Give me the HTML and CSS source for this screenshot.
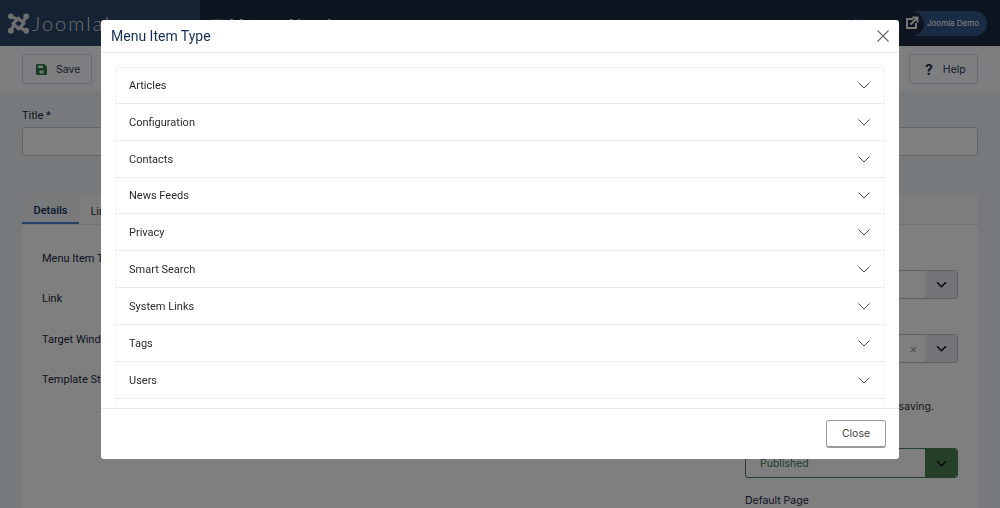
FILE: index.html
```html
<!DOCTYPE html>
<html lang="en">
<head>
  <meta charset="UTF-8">
  <title>Menus: New Item</title>
  <link rel="stylesheet" href="styles.css">
</head>
<body>
  <header class="topbar">
    <div class="brand">
      <svg class="brand-icon" viewBox="0 0 24 24" width="23" height="23" aria-hidden="true">
        <path class="brand-ring" d="M12 6.500 17.500 12 12 17.500 6.500 12z"/>
        <path class="brand-arm" d="M4 5 10 7M20 5 17 10M4 19 7 14M20 19 14 17"/>
        <circle class="brand-dot" cx="4" cy="4.500" r="3"/>
        <circle class="brand-dot" cx="20" cy="4.500" r="3"/>
        <circle class="brand-dot" cx="4" cy="19.500" r="3"/>
        <circle class="brand-dot" cx="20" cy="19.500" r="3"/>
      </svg>
      <span class="brand-name">Joomla!</span>
    </div>
    <div class="page-title">
      <span class="title-icon">☰</span>
      <span>Menus: New Item</span>
    </div>
    <span class="header-tick"></span>
    <div class="demo-pill">
      <span class="demo-icon">
        <svg viewBox="0 0 16 16" width="16" height="16" aria-hidden="true">
          <path class="demo-box" d="M2 3h7v2H4v7h7V8h2v6H2z"/>
          <path class="demo-arrow" d="M6.500 9.500 13 3M8.500 2.500H13.500V7.500"/>
        </svg>
      </span>
      <span>Joomla Demo</span>
    </div>
  </header>

  <div class="toolbar">
    <button class="tool-btn save-btn">
      <svg class="save-icon" viewBox="0 0 11 11" width="11" height="11" aria-hidden="true">
        <path class="save-body" d="M1 0h7.500L11 2.500V10a1 1 0 0 1-1 1H1a1 1 0 0 1-1-1V1a1 1 0 0 1 1-1z"/>
        <rect class="save-slot" x="2" y="1.500" width="5" height="2.500"/>
        <rect class="save-slot" x="3.500" y="6.500" width="4" height="3"/>
      </svg>
      Save
    </button>
    <button class="tool-btn help-btn"><span class="help-icon">?</span>Help</button>
  </div>

  <main class="content">
    <label class="title-label">Title *</label>
    <div class="title-input"></div>

    <section class="card">
      <div class="tabs">
        <span class="tab active">Details</span>
        <span class="tab">Link Type</span>
      </div>
      <div class="card-body">
        <div class="col-left">
          <div class="field-label">Menu Item Type</div>
          <div class="field-label">Link</div>
          <div class="field-label">Target Window</div>
          <div class="field-label">Template Style</div>
        </div>
        <div class="col-right">
          <div class="side-label">Menu</div>
          <div class="select"><span class="select-arrow"><svg class="chev" viewBox="0 0 12 8" width="11" height="7"><path d="M1 1.500 6 6.500l5-5"/></svg></span></div>
          <div class="side-label gap-lg">Parent Item</div>
          <div class="select"><span class="select-x">×</span><span class="select-arrow"><svg class="chev" viewBox="0 0 12 8" width="11" height="7"><path d="M1 1.500 6 6.500l5-5"/></svg></span></div>
          <div class="side-label gap-md">Ordering</div>
          <p class="side-note">Ordering will be available after saving.</p>
          <div class="side-label gap-sm">Status</div>
          <div class="select select-ok"><span class="select-text">Published</span><span class="select-arrow"><svg class="chev" viewBox="0 0 12 8" width="11" height="7"><path d="M1 1.500 6 6.500l5-5"/></svg></span></div>
          <div class="side-label default-page">Default Page</div>
        </div>
      </div>
    </section>
  </main>

  <div class="backdrop">
    <div class="modal">
      <div class="modal-head">
        <h3>Menu Item Type</h3>
        <svg class="modal-x" viewBox="0 0 12 12" width="12" height="12"><path d="M.5.500l11 11M11.500.500l-11 11"/></svg>
      </div>
      <div class="modal-body">
        <div class="accordion">
          <div class="acc-row">Articles<svg class="acc-chev" viewBox="0 0 12 7" width="12" height="7"><path d="M.5.500 6 6l5.500-5.500"/></svg></div>
          <div class="acc-row">Configuration<svg class="acc-chev" viewBox="0 0 12 7" width="12" height="7"><path d="M.5.500 6 6l5.500-5.500"/></svg></div>
          <div class="acc-row">Contacts<svg class="acc-chev" viewBox="0 0 12 7" width="12" height="7"><path d="M.5.500 6 6l5.500-5.500"/></svg></div>
          <div class="acc-row">News Feeds<svg class="acc-chev" viewBox="0 0 12 7" width="12" height="7"><path d="M.5.500 6 6l5.500-5.500"/></svg></div>
          <div class="acc-row">Privacy<svg class="acc-chev" viewBox="0 0 12 7" width="12" height="7"><path d="M.5.500 6 6l5.500-5.500"/></svg></div>
          <div class="acc-row">Smart Search<svg class="acc-chev" viewBox="0 0 12 7" width="12" height="7"><path d="M.5.500 6 6l5.500-5.500"/></svg></div>
          <div class="acc-row">System Links<svg class="acc-chev" viewBox="0 0 12 7" width="12" height="7"><path d="M.5.500 6 6l5.500-5.500"/></svg></div>
          <div class="acc-row">Tags<svg class="acc-chev" viewBox="0 0 12 7" width="12" height="7"><path d="M.5.500 6 6l5.500-5.500"/></svg></div>
          <div class="acc-row">Users<svg class="acc-chev" viewBox="0 0 12 7" width="12" height="7"><path d="M.5.500 6 6l5.500-5.500"/></svg></div>
          <div class="acc-row"></div>
        </div>
      </div>
      <div class="modal-foot">
        <button class="close-btn">Close</button>
      </div>
    </div>
  </div>
</body>
</html>
```

FILE: styles.css
```css
/* Basic Reset */
* {
  margin: 0;
  padding: 0;
  box-sizing: border-box;
}

html, body {
  height: 508px;
  overflow: hidden;
}

body {
  background-color: #eff4f9;
  font-family: Roboto, "Liberation Sans", sans-serif;
  font-size: 11px;
  color: #1c2a44;
}

/* Header */
.topbar {
  display: flex;
  align-items: center;
  height: 46px;
  background-color: #1a2a40;
  color: #fff;
}

.brand {
  display: flex;
  align-items: center;
  gap: 2px;
  width: 200px;
  height: 100%;
  padding-left: 7px;
  background-color: #2c4668;
}

.brand-ring {
  fill: none;
  stroke: #ddd;
  stroke-width: 3.200;
}

.brand-arm {
  fill: none;
  stroke: #ddd;
  stroke-width: 3.200;
}

.brand-dot {
  fill: #ddd;
}

.brand-name {
  font-family: Lato, sans-serif;
  font-weight: 300;
  font-size: 20px;
  letter-spacing: 2px;
  color: #ddd;
}

.page-title {
  display: flex;
  align-items: center;
  gap: 5px;
  flex: 1;
  margin: 4px 0 0 11px;
  font-size: 17px;
}

.title-icon {
  font-size: 14px;
}

.header-tick {
  width: 6px;
  height: 14px;
  margin: 5px 38px 0 0;
  border-left: 1px solid #8d96a3;
  border-right: 1px solid #8d96a3;
}

.demo-pill {
  display: flex;
  align-items: center;
  gap: 3px;
  width: 88px;
  height: 25px;
  margin-right: 13px;
  border-radius: 13px;
  background-color: #34578a;
  font-size: 8px;
  font-family: Inter, sans-serif;
  white-space: nowrap;
}

.demo-icon {
  display: flex;
  align-items: center;
  justify-content: center;
  width: 25px;
  height: 25px;
  border-radius: 50%;
  background-color: #1c2b42;
}

.demo-box {
  fill: #eee;
}

.demo-arrow {
  fill: none;
  stroke: #eee;
  stroke-width: 2;
}

/* Toolbar */
.toolbar {
  display: flex;
  justify-content: space-between;
  height: 46px;
  padding: 8px 22px 0;
  background-color: #fbfdff;
  border-bottom: 1px solid #f2f4f7;
}

.tool-btn {
  display: flex;
  align-items: center;
  height: 30px;
  font-family: Inter, sans-serif;
  font-size: 10.500px;
  color: #2b3950;
  background-color: #fbfdff;
  border: 1px solid #d3d8e0;
  border-radius: 3px;
}

.save-btn {
  width: 70px;
  gap: 9px;
  padding-left: 13px;
}

.save-body {
  fill: #2f7d4a;
}

.save-slot {
  fill: #e9f2ec;
}

.help-btn {
  width: 69px;
  gap: 10px;
  padding-left: 15px;
}

.help-icon {
  font-weight: 700;
  font-size: 14px;
  color: #1c2c46;
}

/* Content */
.content {
  padding: 0 22px;
}

.title-label {
  display: block;
  margin-top: 17px;
  line-height: 14px;
}

.title-input {
  height: 29px;
  margin-top: 4px;
  border: 1px solid #c6ccd6;
  border-radius: 3px;
  background-color: #fff;
}

.card {
  height: 313px;
  margin-top: 39px;
  background-color: #fff;
}

.tabs {
  display: flex;
  height: 30px;
  border-bottom: 1px solid #dfe3e9;
  background-color: #fafbfc;
}

.tab {
  display: flex;
  align-items: center;
  padding: 3px 11.500px 0;
}

.tab.active {
  font-weight: 500;
  color: #132f53;
  background-color: #eff3f7;
  border-bottom: 2px solid #457cc4;
}

.card-body {
  display: flex;
  justify-content: space-between;
  padding: 0 20px;
}

.col-left {
  padding-top: 13.500px;
}

.field-label {
  height: 40.600px;
  line-height: 40.600px;
  white-space: nowrap;
}

.col-right {
  width: 213px;
  font-family: Inter, sans-serif;
  font-size: 10.500px;
}

.side-label {
  height: 14px;
  margin-top: 31px;
  line-height: 14px;
}

.side-label.gap-lg {
  margin-top: 21px;
}

.side-label.gap-md {
  margin-top: 23px;
}

.side-label.gap-sm {
  margin-top: 16px;
}

.side-label.default-page {
  margin-top: 16px;
}

.select {
  display: flex;
  align-items: center;
  justify-content: flex-end;
  height: 29px;
  border: 1px solid #b9c2d0;
  border-radius: 3px;
  background-color: #fff;
}

.select-x {
  margin-right: 8px;
  color: #888;
  font-size: 11px;
}

.select-arrow {
  display: flex;
  align-items: center;
  justify-content: center;
  width: 32px;
  height: 100%;
  border-radius: 0 3px 3px 0;
  background-color: #e6ebf2;
}

.chev path {
  fill: none;
  stroke: #111;
  stroke-width: 1.800;
}

.select-ok {
  justify-content: space-between;
  height: 30px;
  margin-top: 4px;
  border-color: #47805a;
  color: #3f7d52;
}

.select-text {
  padding-left: 14px;
}

.select-ok .select-arrow {
  background-color: #4a7f50;
}

.side-note {
  line-height: 14px;
  white-space: nowrap;
  color: #333;
}

/* Modal, lies over the page */
.backdrop {
  position: fixed;
  inset: 0;
  display: flex;
  justify-content: center;
  align-items: flex-start;
  padding-top: 20px;
  background-color: rgba(0, 0, 0, 0.5);
}

.modal {
  display: flex;
  flex-direction: column;
  width: 798px;
  height: 439px;
  background-color: #fff;
  border-radius: 3px;
  overflow: hidden;
}

.modal-head {
  display: flex;
  align-items: center;
  justify-content: space-between;
  flex: none;
  height: 33px;
  padding: 0 10px;
  border-bottom: 1px solid #e4e7ec;
}

.modal-head h3 {
  font-size: 14px;
  font-weight: 400;
  color: #132f53;
}

.modal-x path {
  fill: none;
  stroke: #666;
  stroke-width: 1.100;
}

.modal-body {
  flex: 1;
  min-height: 0;
  padding: 14px 14px 0;
  overflow: hidden;
}

.accordion {
  border: 1px solid #eef0f3;
  border-bottom: none;
  border-radius: 3px;
}

.acc-row {
  display: flex;
  align-items: center;
  justify-content: space-between;
  height: 36.830px;
  padding: 0.800px 14px 0 13px;
  border-bottom: 1.500px solid #e9ebee;
  color: #2a2a2a;
}

.acc-row:first-child {
  height: 36px;
}

.acc-chev path {
  fill: none;
  stroke: #444;
  stroke-width: 1;
}

.modal-foot {
  display: flex;
  flex: none;
  justify-content: flex-end;
  align-items: center;
  height: 51px;
  padding-right: 13px;
  border-top: 1px solid #e4e7ec;
}

.close-btn {
  width: 60px;
  height: 28px;
  font-family: Inter, sans-serif;
  font-size: 10.500px;
  color: #444;
  background-color: #fff;
  border: 1px solid #9a9a9a;
  border-bottom-width: 2px;
  border-radius: 3px;
}
```
